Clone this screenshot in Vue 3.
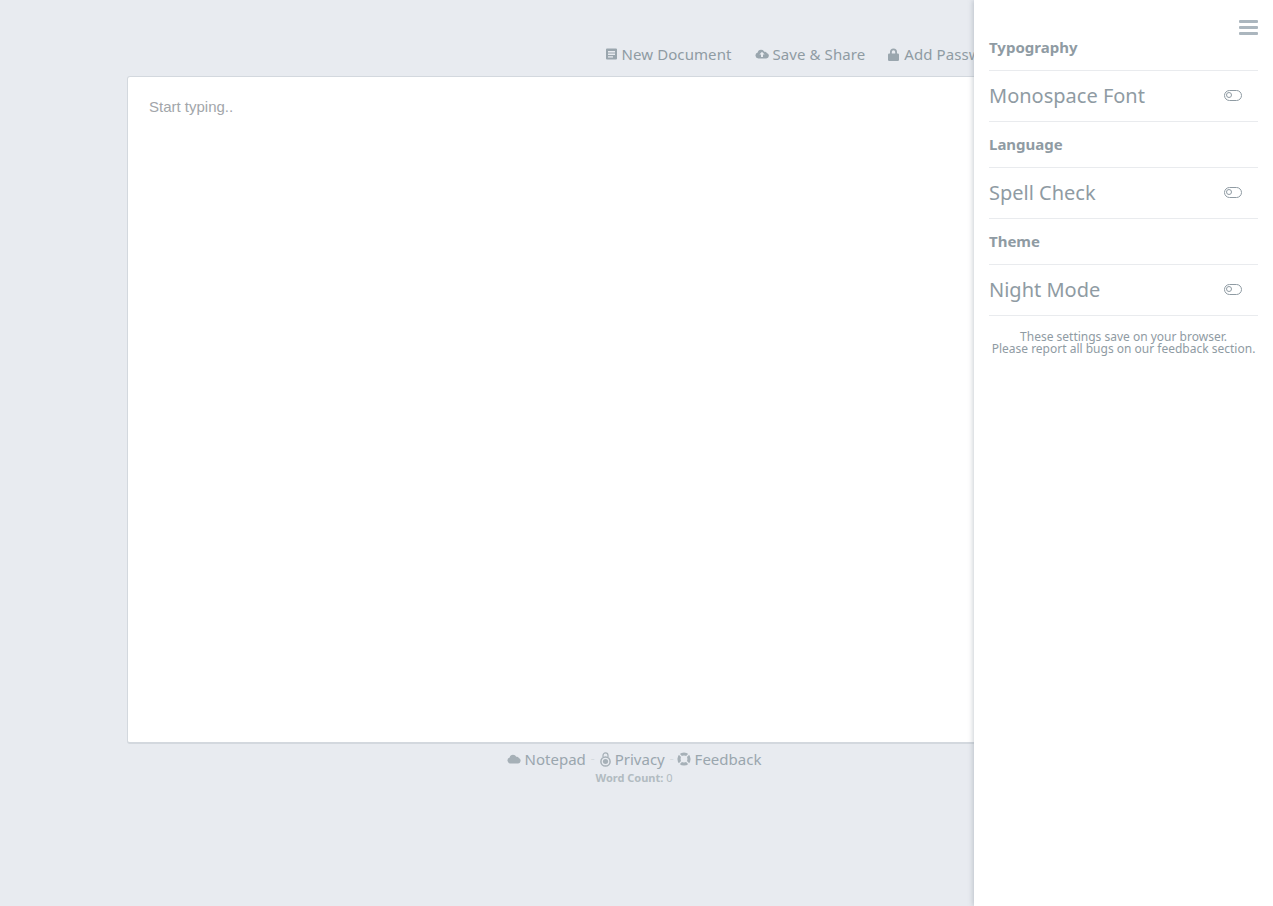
<script setup>
const sections = [
  { title: 'Typography', label: 'Monospace Font' },
  { title: 'Language', label: 'Spell Check' },
  { title: 'Theme', label: 'Night Mode' }
]
</script>

<template>
  <div class="page">
    <main class="wrap">
      <nav class="topnav">
        <a class="navitem">
          <svg class="ico" width="12" height="12" viewBox="0 0 12 12"><path fill-rule="evenodd" d="M1 .5h9a1 1 0 0 1 1 1v9a1 1 0 0 1-1 1H1a1 1 0 0 1-1-1v-9a1 1 0 0 1 1-1zM2 3v1.4h7V3zm0 2.6V7h7V5.600zm0 2.600v1.300h5V8.200z"/></svg>
          New Document
        </a>
        <a class="navitem">
          <svg class="ico" width="14" height="12" viewBox="0 0 14 12"><path fill-rule="evenodd" d="M3.400 10.500A3 3 0 0 1 2.700 4.600 3.300 3.300 0 0 1 6 1.700a3.700 3.700 0 0 1 3.300 2 2.200 2.200 0 0 1 2.500 1.300 2.800 2.800 0 0 1-.6 5.500zM7 3.800 4.400 6.600H6v2.400h2V6.600h1.600z"/></svg>
          Save &amp; Share
        </a>
        <a class="navitem">
          <svg class="ico" width="12" height="14" viewBox="0 0 12 14"><path fill-rule="evenodd" d="M2 5.500V4a3.500 3.500 0 0 1 7 0v1.500h.8a1.200 1.200 0 0 1 1.200 1.200v5.100a1.200 1.200 0 0 1-1.200 1.200H1.200A1.200 1.200 0 0 1 0 11.800V6.700a1.200 1.200 0 0 1 1.200-1.200zm1.800 0h3.400V4a1.700 1.700 0 0 0-3.400 0z"/></svg>
          Add Password
        </a>
      </nav>

      <div class="editor">
        <div class="placeholder">Start typing..</div>
      </div>

      <footer class="foot">
        <div class="links">
          <a class="flink">
            <svg class="fico" width="14" height="10" viewBox="0 0 14 10"><path d="M3.300 9.500a3 3 0 0 1-.6-5.900A3.400 3.400 0 0 1 6 .8a3.700 3.700 0 0 1 3.300 2 2.200 2.200 0 0 1 2.500 1.300 2.800 2.800 0 0 1-.6 5.400z"/></svg>
            Notepad
          </a>
          <span class="sep">-</span>
          <a class="flink">
            <svg class="fico" width="11" height="15" viewBox="0 0 11 15"><path fill="none" stroke="currentColor" stroke-width="1.200" d="M3 5V3.400a2.500 2.500 0 0 1 5 0V5"/><circle cx="5.500" cy="9.500" r="4.600" fill="none" stroke="currentColor" stroke-width="1.500"/><circle cx="5.500" cy="9.500" r="2.600"/></svg>
            Privacy
          </a>
          <span class="sep second">-</span>
          <a class="flink">
            <svg class="fico" width="14" height="14" viewBox="0 0 14 14"><circle cx="7" cy="7" r="5" fill="none" stroke="currentColor" stroke-width="3.200"/><path stroke="#e8ebf0" stroke-width="1.300" d="M2 2l3 3M12 2 9 5M2 12l3-3M12 12 9 9"/></svg>
            Feedback
          </a>
        </div>
        <div class="count"><b>Word Count:</b> 0</div>
      </footer>
    </main>

    <aside class="panel">
      <div class="burger"><span></span><span></span><span></span></div>
      <section v-for="s in sections" :key="s.title">
        <h4 class="head">{{ s.title }}</h4>
        <div class="row">
          <span class="label">{{ s.label }}</span>
          <span class="toggle"><i></i></span>
        </div>
      </section>
      <p class="note">These settings save on your browser.<br>Please report all bugs on our feedback section.</p>
    </aside>
  </div>
</template>

<style>
html, body { margin: 0; background: #e8ebf0; overflow: hidden; }
</style>

<style scoped>
.page {
  position: relative;
  height: 906px;
  overflow: hidden;
  background: #e8ebf0;
  font-family: "Noto Sans", sans-serif;
  color: #8f9ba3;
}
.wrap { width: 1019px; margin: 0 auto; padding-top: 44px; }
.topnav {
  display: flex;
  justify-content: flex-end;
  gap: 23px;
  height: 32px;
  padding-right: 141px;
  box-sizing: border-box;
  white-space: nowrap;
}
.navitem {
  display: flex;
  align-items: flex-start;
  gap: 4px;
  font-size: 15px;
  line-height: 20px;
  letter-spacing: 0.08px;
}
.ico { fill: #9aa6ae; margin-top: 4px; flex: none; }
.editor {
  height: 668px;
  box-sizing: border-box;
  background: #fff;
  border: 1px solid #d3d8de;
  border-bottom-width: 2px;
  border-radius: 3px;
  padding: 21px;
}
.placeholder {
  font-family: "Liberation Sans", sans-serif;
  font-size: 15px;
  line-height: 18px;
  color: #a2a6aa;
}
.foot { width: 1014px; text-align: center; margin-top: 4px; }
.links {
  display: flex;
  justify-content: center;
  align-items: center;
  gap: 5px;
  font-size: 15px;
  line-height: 22px;
  color: #9aa6ae;
}
.flink { display: flex; align-items: center; gap: 4px; }
.fico { fill: #a6b0b7; color: #a6b0b7; flex: none; }
.sep { color: #d5dade; font-size: 12px; }
.sep.second { margin-right: -2px; }
.count {
  font-size: 11px;
  line-height: 15px;
  color: #b2bbc1;
}
.count b { font-weight: 700; }
.panel {
  position: absolute;
  top: 0;
  right: 0;
  bottom: 0;
  width: 299px;
  box-sizing: border-box;
  padding: 37px 15px 0;
  background: #fff;
  box-shadow: -1px 0 5px rgba(120, 130, 145, 0.4);
}
.burger {
  position: absolute;
  top: 20px;
  right: 15px;
  width: 19px;
  display: flex;
  flex-direction: column;
  gap: 3px;
}
.burger span { height: 3px; border-radius: 1px; background: #abb6be; }
.head {
  margin: 0;
  height: 34px;
  box-sizing: border-box;
  font-size: 15px;
  line-height: 21px;
  font-weight: 700;
  color: #8f9ba3;
  border-bottom: 1px solid #e9ebee;
}
.row {
  display: flex;
  align-items: center;
  justify-content: space-between;
  height: 51px;
  box-sizing: border-box;
  padding-right: 16px;
  border-bottom: 1px solid #e9ebee;
  margin-bottom: 12px;
}
.label { font-size: 20px; line-height: 28px; color: #8f9ba3; }
.toggle {
  width: 18px;
  height: 11px;
  margin-top: -2px;
  box-sizing: border-box;
  border: 1.500px solid #8f9ba3;
  border-radius: 6px;
  padding: 1px;
  display: flex;
  align-items: center;
}
.toggle i {
  width: 6px;
  height: 6px;
  box-sizing: border-box;
  border: 1px solid #8f9ba3;
  border-radius: 50%;
}
.note {
  margin: 15px 0 0;
  text-align: center;
  font-size: 12px;
  line-height: 12px;
  color: #8f9ba3;
  white-space: nowrap;
}
</style>
